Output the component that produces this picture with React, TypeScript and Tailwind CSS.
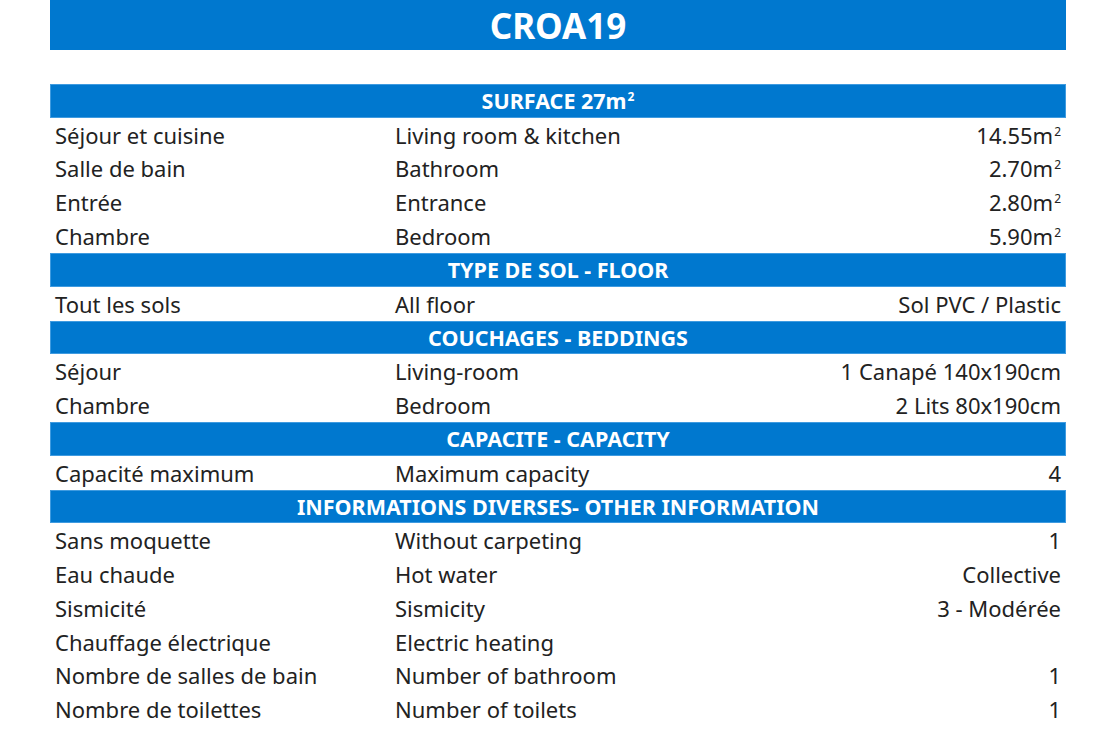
import React from "react";

type Row = { fr: string; en: string; val: React.ReactNode };
type Section = { title: React.ReactNode; rows: Row[] };

const Sup = () => <sup className="text-[12px] relative top-[-8px] ml-[1px]">2</sup>;

const M2 = ({ n }: { n: string }) => (
  <span>
    {n}m
    <Sup />
  </span>
);

const sections: Section[] = [
  {
    title: (
      <span>
        SURFACE 27m
        <Sup />
      </span>
    ),
    rows: [
      { fr: "Séjour et cuisine", en: "Living room & kitchen", val: <M2 n="14.55" /> },
      { fr: "Salle de bain", en: "Bathroom", val: <M2 n="2.70" /> },
      { fr: "Entrée", en: "Entrance", val: <M2 n="2.80" /> },
      { fr: "Chambre", en: "Bedroom", val: <M2 n="5.90" /> },
    ],
  },
  {
    title: "TYPE DE SOL - FLOOR",
    rows: [{ fr: "Tout les sols", en: "All floor", val: "Sol PVC / Plastic" }],
  },
  {
    title: "COUCHAGES - BEDDINGS",
    rows: [
      { fr: "Séjour", en: "Living-room", val: "1 Canapé 140x190cm" },
      { fr: "Chambre", en: "Bedroom", val: "2 Lits 80x190cm" },
    ],
  },
  {
    title: "CAPACITE - CAPACITY",
    rows: [{ fr: "Capacité maximum", en: "Maximum capacity", val: "4" }],
  },
  {
    title: "INFORMATIONS DIVERSES- OTHER INFORMATION",
    rows: [
      { fr: "Sans moquette", en: "Without carpeting", val: "1" },
      { fr: "Eau chaude", en: "Hot water", val: "Collective" },
      { fr: "Sismicité", en: "Sismicity", val: "3 - Modérée" },
      { fr: "Chauffage électrique", en: "Electric heating", val: "" },
      { fr: "Nombre de salles de bain", en: "Number of bathroom", val: "1" },
      { fr: "Nombre de toilettes", en: "Number of toilets", val: "1" },
    ],
  },
];

export default function App() {
  return (
    <div
      className="w-[1100px] h-[733px] bg-white overflow-hidden px-[50px] text-[#222222]"
      style={{ fontFamily: '"Noto Sans", "Open Sans", sans-serif' }}
    >
      <div className="h-[50px] bg-[#0078cf] flex items-center justify-center text-white font-bold text-[35px] leading-none w-[1016px]">
        CROA19
      </div>
      <div className="mt-[34px] w-[1016px]">
        {sections.map((s, i) => (
          <div key={i}>
            <div className="h-[33.8px] bg-[#0078cf] border border-[#3f9be0] flex items-center justify-center text-white font-bold text-[21.5px] leading-none">
              {s.title}
            </div>
            {s.rows.map((r, j) => (
              <div key={j} className="h-[33.8px] flex items-center text-[22px] leading-none">
                <div className="w-[345px] pl-[5px]">{r.fr}</div>
                <div className="flex-1">{r.en}</div>
                <div className="pr-[5px] text-right">{r.val}</div>
              </div>
            ))}
          </div>
        ))}
      </div>
    </div>
  );
}
